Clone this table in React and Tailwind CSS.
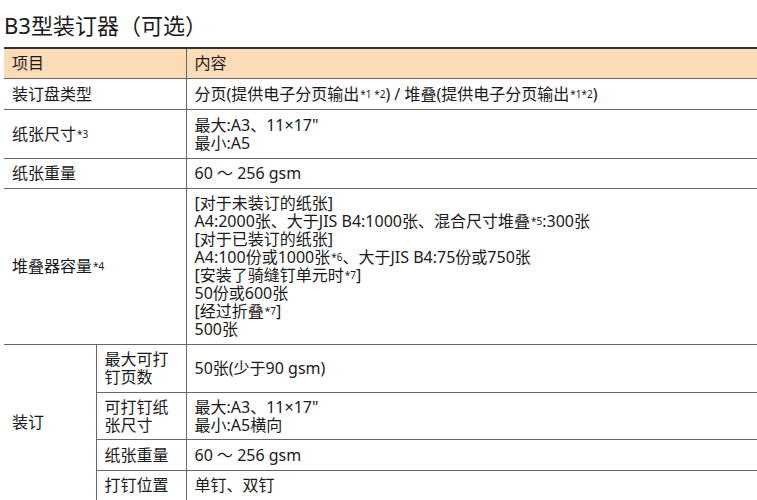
import React from "react";

const Sup = ({ children }) => (
  <sup className="text-[10px] relative top-[-2px] ml-[1px]">{children}</sup>
);

export default function App() {
  const td = "border-b border-[#666] px-[8px] align-middle";
  const tdL = td + " border-r border-[#666]";
  return (
    <div className="w-[757px] h-[500px] bg-white overflow-hidden font-['Noto_Sans','Noto_Sans_CJK_SC',sans-serif] text-[#1a1a1a]">
      <div className="pl-[4px] pt-[10px] h-[47px] text-[22px] leading-[30px]">B3型装订器（可选）</div>
      <table className="ml-[4px] w-[753px] border-collapse text-[16px] leading-[18px] table-fixed">
        <colgroup>
          <col className="w-[92px]" />
          <col className="w-[90px]" />
          <col />
        </colgroup>
        <tbody>
          <tr className="h-[30px] bg-[#fcdcb8] border-t-2 border-[#333]">
            <td colSpan={2} className={tdL}>项目</td>
            <td className={td}>内容</td>
          </tr>
          <tr className="h-[31px]">
            <td colSpan={2} className={tdL}>装订盘类型</td>
            <td className={td}>
              分页(提供电子分页输出<Sup>*1 *2</Sup>) / 堆叠(提供电子分页输出<Sup>*1*2</Sup>)
            </td>
          </tr>
          <tr className="h-[49px]">
            <td colSpan={2} className={tdL}>
              纸张尺寸<Sup>*3</Sup>
            </td>
            <td className={td}>
              最大:A3、11×17"
              <br />
              最小:A5
            </td>
          </tr>
          <tr className="h-[30px]">
            <td colSpan={2} className={tdL}>纸张重量</td>
            <td className={td}>60 ～ 256 gsm</td>
          </tr>
          <tr className="h-[156px]">
            <td colSpan={2} className={tdL}>
              堆叠器容量<Sup>*4</Sup>
            </td>
            <td className={td}>
              [对于未装订的纸张]
              <br />
              A4:2000张、大于JIS B4:1000张、混合尺寸堆叠<Sup>*5</Sup>:300张
              <br />
              [对于已装订的纸张]
              <br />
              A4:100份或1000张<Sup>*6</Sup>、大于JIS B4:75份或750张
              <br />
              [安装了骑缝钉单元时<Sup>*7</Sup>]
              <br />
              50份或600张
              <br />
              [经过折叠<Sup>*7</Sup>]
              <br />
              500张
            </td>
          </tr>
          <tr className="h-[48px]">
            <td rowSpan={4} className={tdL}>装订</td>
            <td className={tdL}>
              最大可打
              <br />
              钉页数
            </td>
            <td className={td}>50张(少于90 gsm)</td>
          </tr>
          <tr className="h-[47px]">
            <td className={tdL}>
              可打钉纸
              <br />
              张尺寸
            </td>
            <td className={td}>
              最大:A3、11×17"
              <br />
              最小:A5横向
            </td>
          </tr>
          <tr className="h-[31px]">
            <td className={tdL}>纸张重量</td>
            <td className={td}>60 ～ 256 gsm</td>
          </tr>
          <tr className="h-[30px]">
            <td className={tdL}>打钉位置</td>
            <td className={td}>单钉、双钉</td>
          </tr>
        </tbody>
      </table>
    </div>
  );
}
